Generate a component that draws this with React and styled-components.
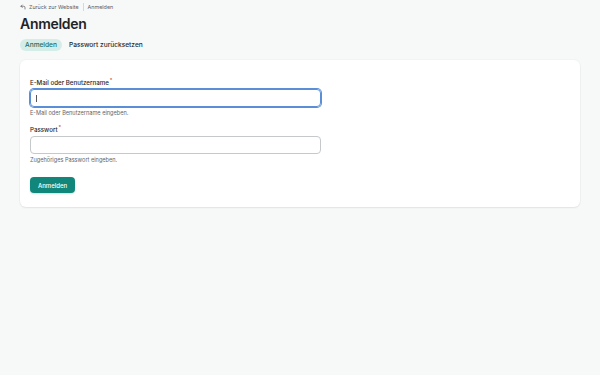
import React from "react";
import styled, { createGlobalStyle } from "styled-components";

const Global = createGlobalStyle`
  html, body {
    margin: 0;
    padding: 0;
    background: #f7f8f8;
    font-family: Inter, "Liberation Sans", sans-serif;
    color: #1f2326;
  }
`;

const Page = styled.div`
  min-height: 375px;
  padding: 0 20px;
  box-sizing: border-box;
`;

const Crumbs = styled.nav`
  display: flex;
  align-items: center;
  height: 13px;
  font-size: 5.4px;
  color: #5c6166;
  gap: 4px;
`;

const CrumbLink = styled.span`
  display: flex;
  align-items: center;
  gap: 3px;
`;

const Sep = styled.span`
  width: 1px;
  height: 8px;
  background: #d6d9db;
`;

const Title = styled.h1`
  margin: 0;
  font-size: 14px;
  font-weight: 600;
  line-height: 22px;
  letter-spacing: -0.3px;
`;

const Tabs = styled.div`
  display: flex;
  gap: 2px;
  margin-top: 4px;
`;

const Tab = styled.span`
  font-size: 6.6px;
  font-weight: 500;
  padding: 2px 5px;
  line-height: 8px;
  border-radius: 6px;
  color: ${(p) => (p.active ? "#1d6f63" : "#24282b")};
  background: ${(p) => (p.active ? "#d4ede8" : "transparent")};
`;

const Card = styled.div`
  margin-top: 9px;
  background: #fff;
  border-radius: 6px;
  box-shadow: 0 1px 2px rgba(0, 0, 0, 0.07), 0 0 0 1px rgba(0, 0, 0, 0.02);
  padding: 19px 10px 14px;
`;

const Field = styled.div`
  display: flex;
  flex-direction: column;
  width: 291px;
  margin-bottom: 10px;
`;

const Label = styled.label`
  font-size: 6.2px;
  font-weight: 500;
  line-height: 7px;
  color: #25292c;
  margin-bottom: 3px;
  sup {
    color: #c53b3b;
    font-size: 5px;
    line-height: 0;
    margin-left: 1px;
  }
`;

const Input = styled.div`
  height: 18px;
  box-sizing: border-box;
  border-radius: 4px;
  border: 1px solid ${(p) => (p.focus ? "#5a8fd8" : "#c5c9cc")};
  box-shadow: ${(p) => (p.focus ? "0 0 0 1px #5a8fd8" : "none")};
  display: flex;
  align-items: center;
  padding-left: 5px;
`;

const Caret = styled.span`
  width: 1px;
  height: 7px;
  background: #555;
`;

const Help = styled.span`
  font-size: 5.6px;
  line-height: 6px;
  color: #62676b;
  margin-top: 3px;
`;

const Button = styled.button`
  display: block;
  margin-top: 14px;
  background: #11877b;
  color: #fff;
  border: none;
  border-radius: 4px;
  font-family: inherit;
  font-size: 6px;
  font-weight: 500;
  height: 16px;
  padding: 0 8px;
  box-shadow: 0 1px 2px rgba(0, 0, 0, 0.15);
`;

const Back = () => (
  <svg width="6" height="6" viewBox="0 0 24 24" fill="none" stroke="#444" strokeWidth="2.5" strokeLinecap="round" strokeLinejoin="round">
    <path d="M9 14 4 9l5-5" />
    <path d="M4 9h10.5a5.5 5.5 0 0 1 5.5 5.5V20" />
  </svg>
);

export default function App() {
  return (
    <Page>
      <Global />
      <Crumbs>
        <CrumbLink>
          <Back />
          Zurück zur Website
        </CrumbLink>
        <Sep />
        <span>Anmelden</span>
      </Crumbs>
      <Title>Anmelden</Title>
      <Tabs>
        <Tab active>Anmelden</Tab>
        <Tab>Passwort zurücksetzen</Tab>
      </Tabs>
      <Card>
        <Field>
          <Label>
            E-Mail oder Benutzername<sup>*</sup>
          </Label>
          <Input focus>
            <Caret />
          </Input>
          <Help>E-Mail oder Benutzername eingeben.</Help>
        </Field>
        <Field>
          <Label>
            Passwort<sup>*</sup>
          </Label>
          <Input />
          <Help>Zugehöriges Passwort eingeben.</Help>
        </Field>
        <Button>Anmelden</Button>
      </Card>
    </Page>
  );
}
